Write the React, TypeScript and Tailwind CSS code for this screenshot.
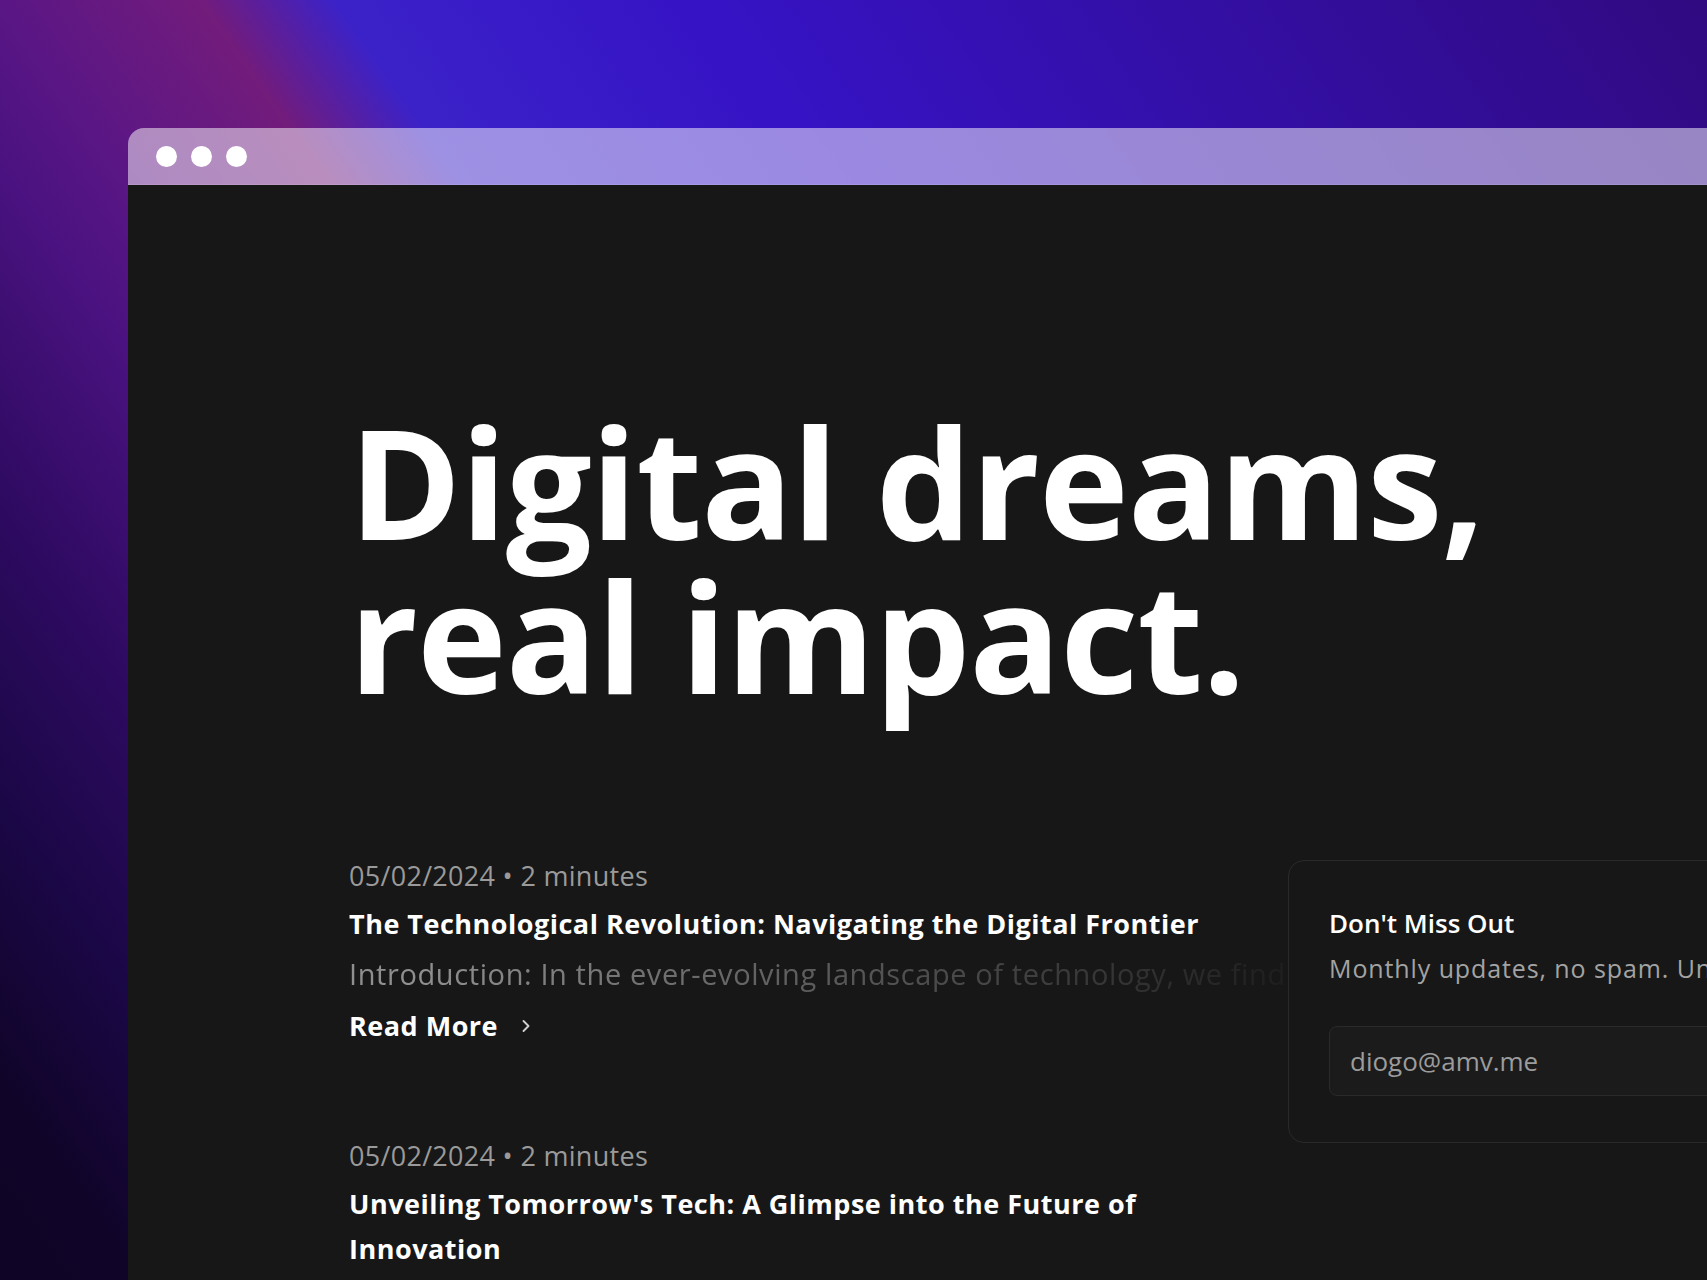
import React from "react";
import { ChevronRight } from "lucide-react";

function Article({ title, intro }: { title: string; intro?: string }) {
  return (
    <article className="flex flex-col">
      <div className="text-[27px] leading-[32px] tracking-[0.3px] text-[#9a9a9a]">05/02/2024 • 2 minutes</div>
      <h2 className="mt-[9px] text-[27px] leading-[45px] tracking-[0.5px] font-bold text-white">{title}</h2>
      {intro && (
        <>
          <p className="mt-[8px] whitespace-nowrap overflow-hidden text-[29px] leading-[40px] tracking-[0.6px] text-[#8f8f8f] [mask-image:linear-gradient(to_right,black_0%,black_8%,rgba(0,0,0,0.06)_100%)]">
            {intro}
          </p>
          <a className="mt-[12px] flex items-center gap-[18px] text-[27px] leading-[40px] tracking-[0.5px] font-bold text-white">
            Read More
            <ChevronRight className="w-[20px] h-[20px] text-[#d0d0d0]" strokeWidth={2.25} />
          </a>
        </>
      )}
    </article>
  );
}

export default function App() {
  return (
    <div
      className="relative w-full h-[1280px] overflow-hidden bg-[linear-gradient(55deg,#0f0326_0px,#100428_110px,#1a0745_267px,#2d0a60_442px,#4a1280_638px,#5a1685_735px,#721c7c_899px,#3b22c8_1008px,#3613c5_1308px,#300a80_2133px)]"
      style={{ fontFamily: '"Open Sans", "Noto Sans", sans-serif' }}
    >
      <div className="ml-[128px] mt-[128px] w-[1800px] rounded-tl-[16px] overflow-hidden">
        <div className="h-[57px] bg-white/50 border-b border-white/10 flex items-center gap-[14px] pl-[28px]">
          <span className="w-[21px] h-[21px] rounded-full bg-white" />
          <span className="w-[21px] h-[21px] rounded-full bg-white" />
          <span className="w-[21px] h-[21px] rounded-full bg-white" />
        </div>
        <div className="bg-[#171717] h-[1200px] pl-[221px] pt-[220px]">
          <h1 className="text-[152px] leading-[154px] font-bold text-white tracking-[-1px]">
            Digital dreams,
            <br />
            real impact.
          </h1>
          <div className="mt-[147px] flex items-start">
            <div className="w-[939px] shrink-0 flex flex-col gap-[94px] overflow-hidden">
              <Article
                title="The Technological Revolution: Navigating the Digital Frontier"
                intro="Introduction: In the ever-evolving landscape of technology, we find ourselves at the crossroads of innovation"
              />
              <Article title="Unveiling Tomorrow's Tech: A Glimpse into the Future of Innovation" />
            </div>
            <div className="w-[560px] shrink-0 overflow-hidden rounded-[16px] border border-[#2a2a2a] px-[40px] pt-[40px] pb-[46px]">
              <h3 className="text-[26px] leading-[44px] font-semibold text-white">Don't Miss Out</h3>
              <p className="mt-[5px] text-[25px] leading-[36px] tracking-[0.9px] text-[#a3a3a3] whitespace-nowrap">
                Monthly updates, no spam. Unsubscribe anytime.
              </p>
              <div className="mt-[40px] h-[70px] rounded-[8px] border border-[#2a2a2a] bg-[#1b1b1b] flex items-center px-[20px] text-[26px] text-[#9c9c9c]">
                diogo@amv.me
              </div>
            </div>
          </div>
        </div>
      </div>
    </div>
  );
}
